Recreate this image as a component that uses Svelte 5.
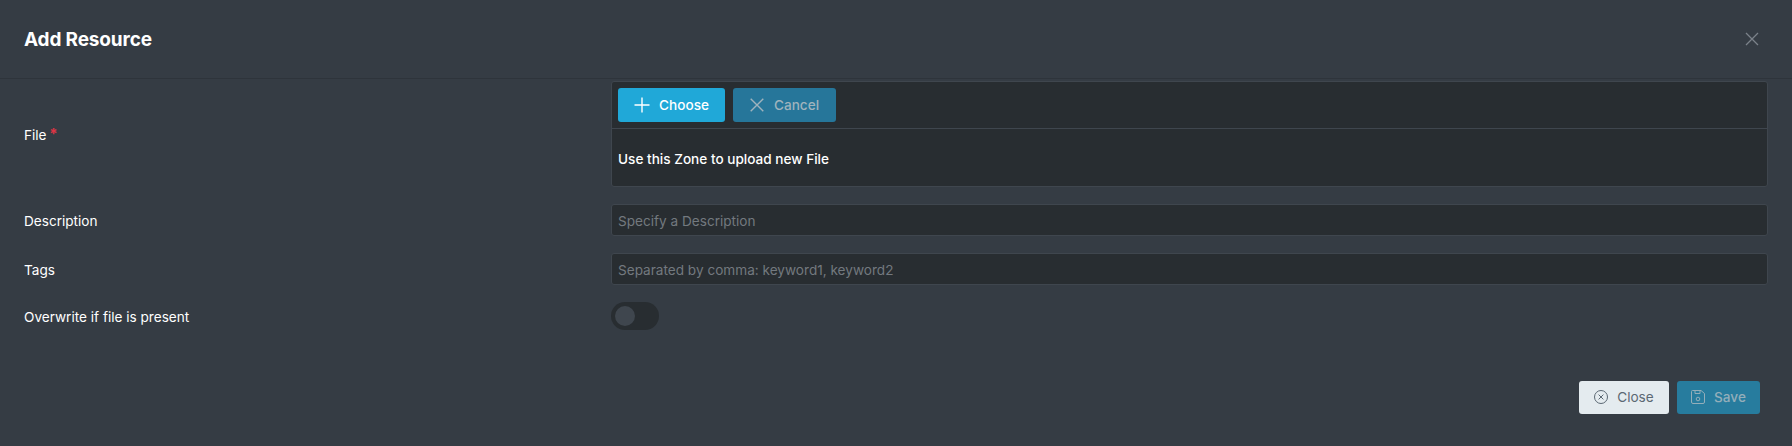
<script>
  const rows = [
    { label: 'Description', placeholder: 'Specify a Description' },
    { label: 'Tags', placeholder: 'Separated by comma: keyword1, keyword2' }
  ];
</script>

<div class="dialog">
  <header class="head">
    <h2>Add Resource</h2>
    <button class="x" aria-label="Close">
      <svg width="14" height="14" viewBox="0 0 14 14"><path d="M1 1L13 13M13 1L1 13" stroke="currentColor" stroke-width="1.3" fill="none"/></svg>
    </button>
  </header>

  <div class="form">
    <div class="row">
      <div class="label file-label">File <span class="req">*</span></div>
      <div class="upload">
        <div class="bar">
          <button class="btn choose">
            <svg width="16" height="16" viewBox="0 0 16 16"><path d="M8 .5V15.5M.5 8H15.5" stroke="currentColor" stroke-width="1.4" fill="none"/></svg>
            Choose
          </button>
          <button class="btn cancel">
            <svg width="14" height="14" viewBox="0 0 14 14"><path d="M.7 .7L13.3 13.3M13.3 .7L.7 13.3" stroke="currentColor" stroke-width="1.4" fill="none"/></svg>
            Cancel
          </button>
        </div>
        <div class="zone">Use this Zone to upload new File</div>
      </div>
    </div>

    {#each rows as r}
      <div class="row">
        <div class="label">{r.label}</div>
        <input class="input" placeholder={r.placeholder} />
      </div>
    {/each}

    <div class="row toggle-row">
      <div class="label">Overwrite if file is present</div>
      <div class="toggle"><span class="knob"></span></div>
    </div>
  </div>

  <footer class="foot">
    <button class="btn close">
      <svg width="14" height="14" viewBox="0 0 14 14" fill="none" stroke="currentColor" stroke-width="1"><circle cx="7" cy="7" r="6.5"/><path d="M4.6 4.6L9.4 9.4M9.4 4.6L4.6 9.4"/></svg>
      Close
    </button>
    <button class="btn save">
      <svg width="14" height="14" viewBox="0 0 14 14" fill="none" stroke="currentColor" stroke-width="1"><path d="M1.5 .5H10L13.5 3.5V12A1.5 1.5 0 0 1 12 13.5H2A1.5 1.5 0 0 1 .5 12V1.5A1 1 0 0 1 1.5 .5Z"/><path d="M4 .5V3.5H9V.5"/><circle cx="7" cy="9" r="1.8"/></svg>
      Save
    </button>
  </footer>
</div>

<style>
  :global(body) {
    margin: 0;
    background: #343b43;
  }
  .dialog {
    height: 446px;
    box-sizing: border-box;
    background: #353c44;
    color: #fff;
    font-family: Inter, "Liberation Sans", sans-serif;
    font-size: 13.6px;
    display: flex;
    flex-direction: column;
    overflow: hidden;
  }
  .head {
    height: 79px;
    box-sizing: border-box;
    border-bottom: 1px solid #2e343b;
    display: flex;
    align-items: center;
    justify-content: space-between;
    padding: 0 24px;
  }
  h2 {
    margin: 1px 0 0;
    font-size: 19px;
    font-weight: 700;
    letter-spacing: -0.15px;
  }
  .x {
    background: none;
    border: 0;
    padding: 0;
    margin-right: 9px;
    color: #7b828a;
    display: flex;
  }
  .form {
    padding: 1.5px 24px 0;
    display: flex;
    flex-direction: column;
    gap: 17.6px;
    flex: 1;
  }
  .row {
    display: grid;
    grid-template-columns: 587px 1fr;
    align-items: center;
  }
  .toggle-row {
    margin-top: -1px;
  }
  .label {
    font-weight: 400;
    padding-top: 2px;
  }
  .file-label {
    padding-top: 0;
  }
  .toggle-row .label {
    padding-top: 3px;
  }
  .req {
    color: #dc3545;
    font-weight: 700;
    font-size: 15px;
    margin-left: -1px;
    vertical-align: 1px;
  }
  .upload {
    background: #282d31;
    border: 1px solid #3f464e;
    border-radius: 3px;
  }
  .bar {
    height: 47.5px;
    box-sizing: border-box;
    padding: 6px 6px;
    display: flex;
    gap: 8px;
    align-items: flex-start;
    border-bottom: 1px solid #3f464e;
  }
  .zone {
    height: 56.7px;
    box-sizing: border-box;
    display: flex;
    align-items: center;
    padding: 3px 6px 0;
    font-weight: 500;
    font-size: 13.6px;
  }
  .btn {
    height: 34.4px;
    border: 0;
    border-radius: 3px;
    font-family: inherit;
    font-size: 13.6px;
    font-weight: 500;
    display: flex;
    align-items: center;
    justify-content: center;
    gap: 9px;
  }
  .choose {
    width: 107px;
    background: #20a8d8;
    color: #fff;
  }
  .cancel {
    width: 103px;
    background: #26769a;
    color: #9fb3bd;
    gap: 10px;
  }
  .input {
    height: 31.6px;
    box-sizing: border-box;
    width: 100%;
    background: #282d31;
    border: 1px solid #3f464e;
    border-radius: 3px;
    padding: 1.5px 6px 0;
    font-family: inherit;
    font-size: 13.6px;
    color: #fff;
    outline: none;
  }
  .input::placeholder {
    color: #73797f;
    opacity: 1;
  }
  .toggle {
    width: 48px;
    height: 28px;
    border-radius: 14px;
    background: #282d31;
    display: flex;
    align-items: center;
    padding-left: 4px;
    box-sizing: border-box;
  }
  .knob {
    width: 20px;
    height: 20px;
    border-radius: 50%;
    background: #3f464e;
  }
  .foot {
    display: flex;
    justify-content: flex-end;
    gap: 8px;
    padding: 0 32px 32.3px;
  }
  .close {
    width: 90px;
    height: 32.7px;
    background: #e4ebef;
    color: #5b6873;
    font-weight: 400;
  }
  .save {
    width: 83px;
    height: 32.7px;
    background: #277c9e;
    color: #93aeba;
  }
</style>
